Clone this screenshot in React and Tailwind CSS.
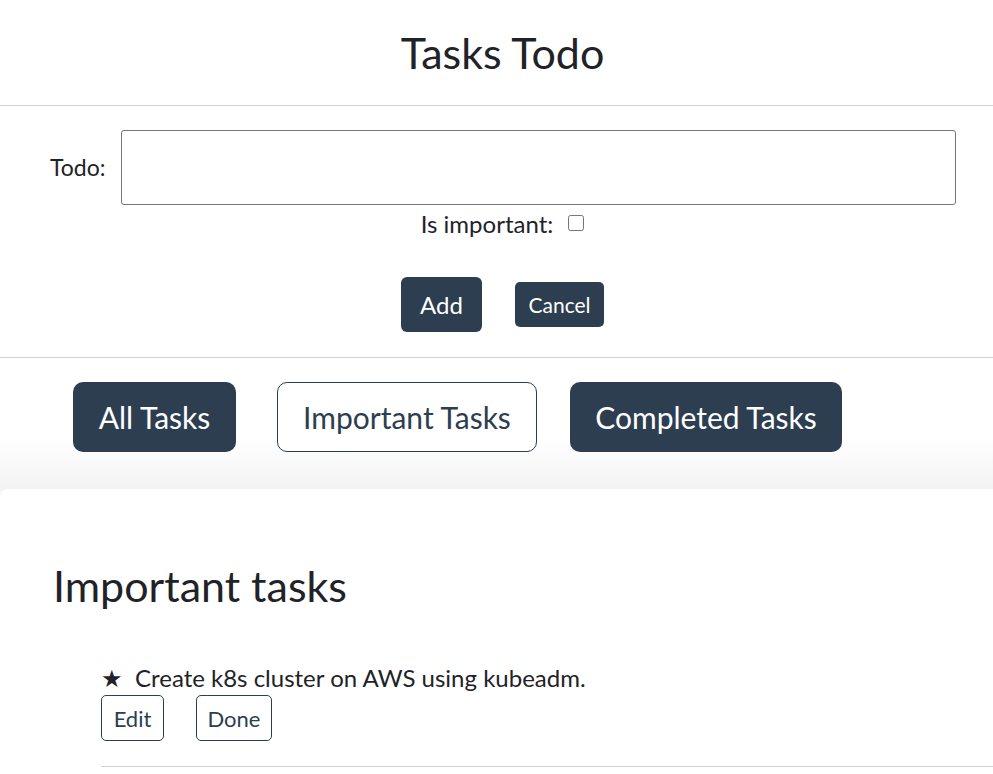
import { useState } from "react";

const tasks = [{ id: 1, text: "Create k8s cluster on AWS using kubeadm.", important: true }];

export default function App() {
  const [todo, setTodo] = useState("");
  const [important, setImportant] = useState(false);

  return (
    <div className="min-h-screen bg-white text-[#1f2328] font-['Lato','Liberation_Sans',sans-serif]">
      {/* header */}
      <header className="h-[106px] border-b border-[#cfcfcf] flex items-center justify-center pl-[12px]">
        <h1 className="text-[43px] leading-none">Tasks Todo</h1>
      </header>

      {/* form */}
      <div className="h-[252px] border-b border-[#cfcfcf] pt-[24px]">
        <div className="flex items-center pl-[50px] pr-[37px]">
          <label className="text-[23px] mr-[15px]">Todo:</label>
          <input
            value={todo}
            onChange={(e) => setTodo(e.target.value)}
            className="flex-1 h-[75px] border border-[#767676] rounded-[3px] px-3 text-[20px] outline-none"
          />
        </div>
        <div className="flex items-center justify-center mt-[1px] gap-[15px] pl-[12px]">
          <span className="text-[24px]">Is important:</span>
          <input
            type="checkbox"
            checked={important}
            onChange={() => setImportant(!important)}
            className="w-[16px] h-[16px] -mt-[3px]"
          />
        </div>
        <div className="flex items-center justify-center gap-[33px] mt-[35px] pl-[12px]">
          <button className="w-[81px] h-[55px] rounded-[6px] bg-[#2c3e50] text-white text-[24px]">Add</button>
          <button className="w-[89px] h-[45px] rounded-[5px] bg-[#2c3e50] text-white text-[21px]">Cancel</button>
        </div>
      </div>

      {/* tabs */}
      <div className="h-[131px] bg-gradient-to-b from-white from-[60%] to-[#f3f3f3] pt-[24px] pl-[73px] flex items-start">
        <button className="w-[163px] h-[70px] rounded-[10px] bg-[#2c3e50] text-white text-[30px]">All Tasks</button>
        <button className="ml-[41px] w-[260px] h-[70px] rounded-[10px] bg-white border border-[#2c3e50] text-[#2c3e50] text-[30px]">
          Important Tasks
        </button>
        <button className="ml-[33px] w-[272px] h-[70px] rounded-[10px] bg-[#2c3e50] text-white text-[30px]">Completed Tasks</button>
      </div>

      {/* list */}
      <div className="bg-[#f3f3f3]">
        <div className="bg-white rounded-tl-[8px] pt-[75px]">
          <h2 className="text-[43px] leading-none pl-[53px]">Important tasks</h2>
          <ul className="mt-[56px] pl-[101px]">
            {tasks.map((t) => (
              <li key={t.id} className="border-b border-[#cfcfcf] pb-[25px]">
                <div className="flex items-center text-[24px] leading-[30px]">
                  <span className="w-[34px] text-[24px] leading-none">★</span>
                  <span>{t.text}</span>
                </div>
                <div className="flex gap-[32px] mt-[2px]">
                  <button className="w-[63px] h-[46px] rounded-[5px] border border-[#2c3e50] text-[#2c3e50] text-[22px]">Edit</button>
                  <button className="w-[76px] h-[46px] rounded-[5px] border border-[#2c3e50] text-[#2c3e50] text-[22px]">Done</button>
                </div>
              </li>
            ))}
          </ul>
        </div>
      </div>
    </div>
  );
}
